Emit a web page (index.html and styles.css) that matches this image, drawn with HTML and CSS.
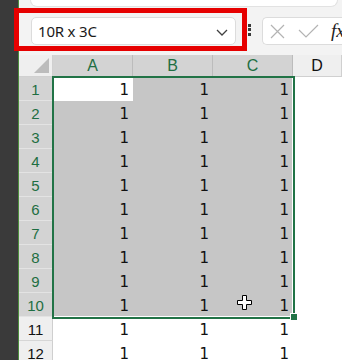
FILE: index.html
```html
<!DOCTYPE html>
<html>
<head>
<meta charset="utf-8">
<link rel="stylesheet" href="styles.css">
</head>
<body>
<div class="app">
  <div class="side"></div>
  <div class="main">
    <div class="ribbon"></div>
    <div class="fbar">
      <div class="namebox">
        <span class="nametext">10R x 3C</span>
        <svg class="chev" width="12" height="7" viewBox="0 0 12 7"><path d="M1 1 L6 6 L11 1" fill="none" stroke="#404040" stroke-width="1.3"/></svg>
      </div>
      <div class="dots"><i></i><i></i><i></i></div>
      <div class="formula">
        <svg class="fx-x" width="15" height="15" viewBox="0 0 15 15"><path d="M1 1 L14 14 M14 1 L1 14" stroke="#b3b3b3" stroke-width="1.2" fill="none"/></svg>
        <svg class="fx-check" width="21" height="14" viewBox="0 0 21 14"><path d="M1 6 L8 13 L20 1" stroke="#b3b3b3" stroke-width="1.2" fill="none"/></svg>
        <span class="fx">fx</span>
      </div>
    </div>
    <div class="grid">
      <div class="corner"><span class="tri"></span></div>
      <div class="ch sel">A</div>
      <div class="ch sel">B</div>
      <div class="ch sel">C</div>
      <div class="ch">D</div>

      <div class="rh sel">1</div><div class="c act">1</div><div class="c s">1</div><div class="c s">1</div><div class="c"></div>
      <div class="rh sel">2</div><div class="c s">1</div><div class="c s">1</div><div class="c s">1</div><div class="c"></div>
      <div class="rh sel">3</div><div class="c s">1</div><div class="c s">1</div><div class="c s">1</div><div class="c"></div>
      <div class="rh sel">4</div><div class="c s">1</div><div class="c s">1</div><div class="c s">1</div><div class="c"></div>
      <div class="rh sel">5</div><div class="c s">1</div><div class="c s">1</div><div class="c s">1</div><div class="c"></div>
      <div class="rh sel">6</div><div class="c s">1</div><div class="c s">1</div><div class="c s">1</div><div class="c"></div>
      <div class="rh sel">7</div><div class="c s">1</div><div class="c s">1</div><div class="c s">1</div><div class="c"></div>
      <div class="rh sel">8</div><div class="c s">1</div><div class="c s">1</div><div class="c s">1</div><div class="c"></div>
      <div class="rh sel">9</div><div class="c s">1</div><div class="c s">1</div><div class="c s">1</div><div class="c"></div>
      <div class="rh sel">10</div><div class="c s">1</div><div class="c s">1</div><div class="c s">1</div><div class="c"></div>
      <div class="rh">11</div><div class="c">1</div><div class="c">1</div><div class="c">1</div><div class="c"></div>
      <div class="rh">12</div><div class="c">1</div><div class="c">1</div><div class="c">1</div><div class="c"></div>
    </div>
  </div>
  <div class="highlight"></div>
  <div class="selection"></div>
  <div class="handle"></div>
  <svg class="cursor" width="15" height="15" viewBox="0 0 15 15"><path d="M5.5 0.5 H9.5 V5.5 H14.5 V9.5 H9.5 V14.5 H5.5 V9.5 H0.5 V5.5 H5.5 Z" fill="#fff" stroke="#000" stroke-width="1"/></svg>
</div>
</body>
</html>
```

FILE: styles.css
```css
* { box-sizing: border-box; }
html, body { margin: 0; padding: 0; }
body { width: 342px; height: 360px; overflow: hidden; background: #f3f3f3; }

.app {
  position: relative;
  display: flex;
  width: 342px;
  height: 360px;
  overflow: hidden;
}

.side {
  width: 19px;
  flex: none;
  background: #3a3a3a;
  border-right: 1px solid #4c8c3c;
}

.main {
  flex: 1;
  display: flex;
  flex-direction: column;
  background: #f3f3f3;
  min-width: 0;
}

.ribbon {
  height: 7px;
  margin-left: 11px;
  width: 308px;
  background: #fff;
  border: 1px solid #e2e2e2;
  border-top: none;
  border-radius: 0 0 7px 7px;
  flex: none;
}

.fbar {
  display: flex;
  align-items: center;
  height: 48px;
  padding-top: 10px;
  padding-bottom: 10px;
  flex: none;
}

.namebox {
  margin-left: 12px;
  width: 205px;
  height: 28px;
  background: #fff;
  border: 1px solid #dcdcdc;
  border-radius: 5px;
  display: flex;
  align-items: center;
  justify-content: space-between;
  padding: 0 7px 0 6px;
  flex: none;
}

.nametext {
  font-family: "Noto Sans", sans-serif;
  font-size: 15px;
  color: #1a1a1a;
  letter-spacing: -0.2px;
}

.chev { display: block; margin-top: 2px; }

.dots {
  margin-left: 12px;
  width: 3px;
  display: flex;
  flex-direction: column;
  gap: 1.5px;
  margin-top: -3px;
  flex: none;
}
.dots i {
  display: block;
  width: 3px;
  height: 3px;
  background: #3a3a3a;
}

.formula {
  margin-left: 11px;
  width: 100px;
  height: 28px;
  background: #fff;
  border: 1px solid #dcdcdc;
  border-right: none;
  border-radius: 5px 0 0 5px;
  display: flex;
  align-items: center;
  padding-left: 7px;
  flex: none;
}
.fx-x { display: block; }
.fx-check { display: block; margin-left: 13px; }
.fx {
  margin-left: 12px;
  font-family: "Liberation Serif", serif;
  font-style: italic;
  font-size: 19px;
  color: #222;
}

.grid {
  display: grid;
  grid-template-columns: 34px 80px 80px 80px 49px;
  grid-template-rows: 22px repeat(12, 24px);
  background: #fff;
}

.corner {
  position: relative;
  background: #efefef;
  border-right: 1px solid #d0d0d0;
  border-bottom: 1px solid #d0d0d0;
}
.tri {
  position: absolute;
  right: 3px;
  bottom: 3px;
  width: 0;
  height: 0;
  border-left: 15px solid transparent;
  border-bottom: 15px solid #bcbcbc;
}

.ch {
  background: #efefef;
  border-right: 1px solid #d0d0d0;
  border-bottom: 1px solid #d0d0d0;
  font-family: "Liberation Sans", sans-serif;
  font-size: 16px;
  color: #111;
  text-align: center;
  line-height: 22px;
}
.ch.sel {
  background: #d3d3d3;
  color: #1e6e42;
  border-right-color: #bcbcbc;
}

.rh {
  background: #efefef;
  border-right: 1px solid #cfcfcf;
  border-bottom: 1px solid #d6d6d6;
  font-family: "Liberation Sans", sans-serif;
  font-size: 15px;
  color: #111;
  text-align: center;
  line-height: 25px;
}
.rh.sel {
  background: #d3d3d3;
  color: #1e6e42;
  border-bottom-color: #e3e3e3;
}

.c {
  font-family: "DejaVu Sans", sans-serif;
  font-size: 15px;
  color: #111;
  text-align: right;
  padding-right: 4px;
  line-height: 26px;
  background: #fff;
}
.c.s { background: #c6c6c6; }
.c.act { background: #fff; }

.highlight {
  position: absolute;
  left: 14px;
  top: 8px;
  width: 233px;
  height: 43px;
  border: 5px solid #e60000;
}

.selection {
  position: absolute;
  left: 52px;
  top: 76px;
  width: 243px;
  height: 243px;
  border: 2px solid #217346;
  box-shadow: inset -1px -1px 0 #fff;
}

.handle {
  position: absolute;
  left: 290px;
  top: 313px;
  width: 7px;
  height: 7px;
  background: #217346;
  border-left: 1px solid #fff;
  border-top: 1px solid #fff;
}

.cursor {
  position: absolute;
  left: 237px;
  top: 295px;
}
```
